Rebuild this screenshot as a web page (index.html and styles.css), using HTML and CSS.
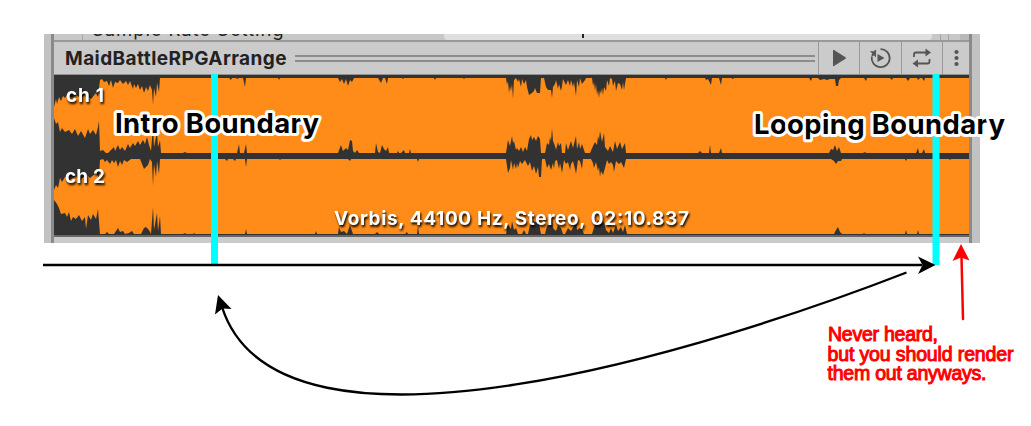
FILE: index.html
```
<!DOCTYPE html>
<html lang="en">
<head>
<meta charset="utf-8">
<title>MaidBattleRPGArrange</title>
<link rel="stylesheet" href="styles.css">
</head>
<body>
<main class="stage">
  <section class="panel">
    <div class="inspector">
      <div class="setting-row">
        <div class="setting-label"><span>Sample Rate Setting</span></div>
        <div class="setting-field"><span class="field-tick"></span></div>
        <div class="setting-end"></div>
      </div>
      <header class="toolbar">
        <h1 class="title">MaidBattleRPGArrange</h1>
        <div class="grip"></div>
        <div class="tool"><svg width="41" height="32" viewBox="0 0 41 32"><path class="solid" d="M15 8.500Q15 7.500 16 8L27.500 15.200Q28.500 16 27.500 16.800L16 24Q15 24.500 15 23.500Z"/></svg></div>
        <div class="tool"><svg width="41" height="32" viewBox="0 0 41 32"><path class="line" d="M21.500 7.100A9 9 0 1 1 12.800 14.500M15.500 9.500L17 8.500"/><path class="solid" d="M10.800 9.200H17V15.500L15 13.200L13.500 14.500L12.300 13.300L13.300 11.500Z"/><path class="solid" d="M18.500 12L25.500 16L18.500 20Z"/></svg></div>
        <div class="tool"><svg width="41" height="32" viewBox="0 0 41 32"><path class="line" d="M13 15V12.500Q13 10.500 15 10.500H26M28.500 17V19.500Q28.500 21.500 26.500 21.500H15"/><path class="solid" d="M24.500 6.500L30 10.500L24.500 14.500ZM17 17.500L11.500 21.500L17 25.500Z"/></svg></div>
        <div class="tool tool-menu"><svg width="26" height="32" viewBox="0 0 26 32"><circle class="solid" cx="14.500" cy="10" r="2.100"/><circle class="solid" cx="14.500" cy="16" r="2.100"/><circle class="solid" cx="14.500" cy="22" r="2.100"/></svg></div>
      </header>
      <svg class="wave" viewBox="54 75 915 160" width="915" height="160">
        <rect class="dark" x="54" y="75" width="915" height="3"/>
        <rect class="dark" x="54" y="153" width="915" height="6"/>
        <rect class="dark" x="54" y="234" width="915" height="1"/>
        <!-- channel 1, upper envelope -->
        <path class="dark" d="M54 75V107L56 99L57 104L59 97L61 101L63 96L65 98L68 94L72 99L76 95L81 98L86 94L91 99L96 93L98 97L100 80L102 79L104 82L107 81L109 86L111 80L113 88L115 82L118 83L120 80L123 84L126 81L128 85L130 81L133 89L134 84L136 88L138 84L140 90L142 86L144 93L146 87L148 91L150 85L152 90L153 105L154 88L156 97L157 83L159 92L160 78V75Z"/>
        <path class="dark" d="M229 78L231 80L232 78H236L237 79L239 78H243L245 87L246 78H278L279 80L280 78H338L340 82L342 79L344 84L346 79L348 86L350 80L352 82L354 78H378L381 83L383 78H385L387 84L388 78H402L403 79L404 78H434L435 80L436 78H463L464 79L465 78H506L507 85L508 81L509 93L510 86L511 91L512 84L513 99L514 80L516 78L518 82L519 79L521 87L522 79L524 84L526 80L527 87L529 95L532 93L534 91L535 88L537 93L540 93L541 78H544L546 87L548 90L551 90L552 98L553 87L555 84L556 80L558 89L559 84L561 91L562 86L563 79L566 85L568 80L570 86L571 80L573 87L574 82L576 96L577 80L579 87L580 78L582 84L585 80L586 78H592L593 86L594 82L595 91L596 84L597 95L598 90L599 98L600 90L601 94L602 88L603 95L604 87L606 91L607 80L609 86L610 78L612 79L613 86L615 81L616 91L618 83L620 84L622 90L623 82L624 90L626 78H665L666 80L667 78H705L706 80L708 79L711 85L712 78H719L721 85L722 78H731L733 79L734 78H809L811 81L812 78H818L820 80L824 79L827 80L830 79L835 79L836 86L838 86L839 80L841 78H864L866 81L867 78H890L892 80L893 78H906L908 81L910 78H917L918 80L920 78H922L924 81L925 78Z"/>
        <!-- channel 1, lower envelope -->
        <path class="dark" d="M54 153V118L56 124L58 122L60 132L62 128L65 132L69 130L72 134L75 129L78 136L81 131L85 138L88 129L90 134L93 130L96 135L98 127L99 121L100 151L103 150L106 153H108L111 150L114 147L115 151L118 145L120 150L122 147L125 151L128 144L130 148L133 143L135 146L138 141L140 145L143 140L145 144L147 137L149 145L151 151L153 126L154 147L157 132L158 147L160 140L161 153Z"/>
        <path class="dark" d="M183 153L185 152L187 153H237L239 144L240 153H244L246 144L247 153H338L341 145L343 151L346 148L348 150L350 140L352 141L353 151L355 153L357 150L359 153H375L376 143L378 152L380 153L382 145L384 149L386 151L388 147L389 153H397L398 151L399 153H401L404 150L405 153H409L410 149L411 153H506L508 140L510 146L512 136L513 143L514 141L516 150L517 148L519 151L521 147L523 152L525 147L527 151L529 139L531 135L532 140L534 137L536 141L538 136L540 139L541 153H545L547 143L549 145L550 137L551 141L552 128L553 141L555 146L556 150L558 142L559 146L561 143L562 153H565L566 143L568 150L571 141L573 148L576 136L577 149L579 142L580 149L582 144L585 153H590L593 146L595 142L597 145L598 136L599 140L600 131L602 142L604 133L605 147L608 151L610 146L613 152L615 141L617 149L620 142L622 149L625 143L626 153H698L700 151L702 153H709L710 145L711 153H719L721 148L722 153H829L831 149L833 150L835 145L837 151L839 147L841 153H863L865 152L866 153H916L918 148L919 153H922L924 149L925 153Z"/>
        <!-- channel 2, upper envelope -->
        <path class="dark" d="M54 159V190L56 185L58 188L60 178L62 182L65 177L70 180L76 176L80 181L86 174L90 178L96 173L99 178L100 160L103 159L105 162L107 160L110 164L112 160L114 163L116 160L118 167L120 161L122 165L124 160L127 162L131 159H140L142 164L144 169L146 167L148 165L150 159L152 162L153 186L154 164L156 177L157 161L159 174L160 159Z"/>
        <path class="dark" d="M225 159L227 161L228 159H233L235 161L236 159H245L246 167L247 159H279L280 160L281 159H348L350 161L351 159H417L418 162L419 159H506L508 173L510 168L511 160L513 170L514 163L516 169L517 163L518 168L520 161L522 164L525 160L528 166L530 162L532 171L534 166L536 174L538 167L539 177H541L542 159H545L547 168L549 164L551 170L553 163L554 169L555 161L557 160L559 169L560 163L562 173L564 160L566 164L568 162L570 170L571 164L573 161L575 169L576 174L578 160L580 161L582 169L583 159H591L593 163L594 168L596 162L598 171L599 167L600 177L601 171L603 175L605 168L607 160L609 164L611 162L613 165L614 172L616 161L619 164L621 162L624 168L626 159H831L834 161L836 164L838 161L841 161L842 159H905L906 161L907 159H949L950 160L951 159Z"/>
        <!-- channel 2, lower envelope -->
        <path class="dark" d="M54 235V200L57 204L59 208L61 214L65 213L67 217L69 212L71 221L73 217L76 219L79 215L82 221L85 217L86 229L88 215L91 220L93 214L96 219L98 209L100 234V235Z"/>
        <path class="dark" d="M105 234L107 232L109 234H114L118 228L120 232L123 231L125 234L129 233L132 231L134 234H141L144 228L146 227L149 230L151 234L153 207L154 230L157 213L158 231L160 216L161 234H183L185 233L186 234H193L194 233L195 234H245L246 229L247 234H315L316 231L317 234H338L339 227L341 232L344 231L347 234L350 225L351 228L353 234H375L377 232L379 234H405L407 232L408 234H417L418 226L419 234H506L508 225L511 229L512 221L514 230L516 228L518 234H522L524 230L526 234H528L530 225L533 221L536 222L539 224L541 234H545L547 226L550 222L552 217L553 228L556 231L558 225L561 228L563 234H565L568 228L571 231L574 226L576 220L577 230L581 227L584 234H592L595 224L598 220L601 224L604 222L606 230L609 233L611 228L613 233L616 225L618 231L621 227L623 232L625 225L627 234H834L836 230L838 227L840 232L842 234H863L864 233L865 234H905L906 230L907 234H917L918 230L919 234Z"/>
        <g class="wave-text">
          <text x="66" y="102" textLength="38">ch 1</text>
          <text x="65" y="183" textLength="40">ch 2</text>
          <text x="334" y="224.500" textLength="355">Vorbis, 44100 Hz, Stereo, 02:10.837</text>
        </g>
      </svg>
      <div class="base-line"></div>
    </div>
  </section>
  <svg class="notes" width="1031" height="426" viewBox="0 0 1031 426">
    <path class="boundary" d="M214.500 74V264M936 74V265"/>
    <g class="boundary-text">
      <text x="115" y="132.500" textLength="204">Intro Boundary</text>
      <text x="754" y="133.500" textLength="251">Looping Boundary</text>
    </g>
    <path class="ink" d="M43 265H922M906.500 272.500C720 345 280 487 222 307"/>
    <path class="head" d="M935.500 265L918 256.500L922.500 265L918 274ZM218 295L231.500 309L222.500 308.500L215 314.500Z"/>
    <path class="ink-red" d="M963 319L961.500 257"/>
    <path class="head-red" d="M961 244L969.500 260.500L961 257.500L952.500 261Z"/>
    <g class="remark">
      <text x="828" y="341" textLength="110">Never heard,</text>
      <text x="827.500" y="360.500" textLength="186">but you should render</text>
      <text x="827.500" y="380.300" textLength="159">them out anyways.</text>
    </g>
  </svg>
</main>
</body>
</html>
```
FILE: styles.css
```
body { margin: 0; background: #fff; }
.stage { position: relative; width: 1031px; height: 426px; overflow: hidden; box-sizing: border-box; padding: 34px 0 0 44px; font-family: Inter, "Liberation Sans", sans-serif; }
.panel { width: 936px; height: 209px; box-sizing: border-box; padding: 0 8px 0 7px; background: #c2c2c2; }
.inspector { height: 209px; box-sizing: border-box; border-left: 3px solid #8a8a8a; border-right: 3px solid #8a8a8a; background: #cbcbcb; display: flex; flex-direction: column; }
.setting-row { display: flex; height: 6px; flex: none; background: #c8c8c8; border-bottom: 2px solid #999; overflow: hidden; }
.setting-label { width: 361px; margin-left: 28px; border-left: 1px solid #a8a8a8; }
.setting-label span { display: block; margin: -16px 0 0 9px; font-size: 18.5px; line-height: 22px; letter-spacing: .9px; color: #222; white-space: nowrap; }
.setting-field { width: 488px; background: #dfdfdf; border-radius: 0 0 4px 4px; }
.field-tick { display: block; width: 2px; height: 4px; margin-left: 138px; background: #222; }
.setting-end { width: 7px; margin-left: 8px; border: solid #a5a5a5; border-width: 0 1px; box-shadow: 20px 0 #b8b8b8; }
.toolbar { display: flex; height: 32px; flex: none; border-bottom: 1px solid #8f9192; }
.title { margin: 0 0 0 11px; width: 230px; font-size: 19px; font-weight: 700; line-height: 33px; letter-spacing: .43px; color: #222; white-space: nowrap; }
.grip { flex: 1; height: 3px; margin: 13px 3px 0 0; border: solid #8c8c8c; border-width: 2px 0; }
.tool { width: 41.300px; box-sizing: border-box; border-left: 1px solid #999; }
.tool-menu { width: 27px; }
.tool svg { display: block; margin-left: -1px; }
.solid { fill: #555; }
.line { fill: none; stroke: #555; stroke-width: 1.800; }
.wave { display: block; flex: none; background: #ff8c19; }
.dark { fill: #323232; }
.wave-text { font-size: 19px; font-weight: 700; fill: #fff; filter: drop-shadow(1px 2px 1px #000); }
.base-line { height: 2px; background: #666; }
.notes { position: absolute; left: 0; top: 0; }
.boundary { stroke: #0ff; stroke-width: 7; }
.boundary-text { font-size: 27.5px; font-weight: 700; fill: #000; stroke: #fff; stroke-width: 6px; stroke-linejoin: round; paint-order: stroke; }
.ink { fill: none; stroke: #000; stroke-width: 2.400; }
.ink-red { stroke: #f00; stroke-width: 2.500; stroke-linecap: round; }
.head-red { fill: #f00; }
.remark { font-family: "Liberation Sans", Arial, sans-serif; font-size: 19.5px; fill: #f00; stroke: #f00; stroke-width: 1px; }
```
